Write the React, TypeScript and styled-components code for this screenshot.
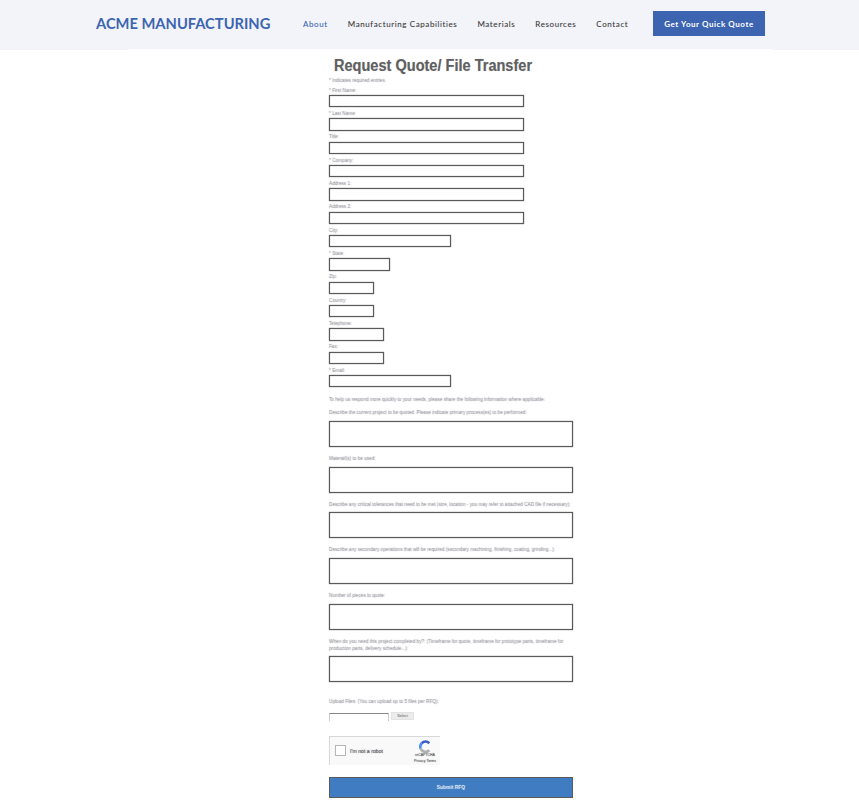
import React from "react";
import styled, { createGlobalStyle, css } from "styled-components";

const Global = createGlobalStyle`
  html, body { margin: 0; padding: 0; background: #fff; }
  body { font-family: "Liberation Sans", Arial, sans-serif; }
`;

const smallText = css`
  font-size: 4.7px;
  color: rgba(120, 120, 130, 0.4);
  text-shadow: 0 0 1px rgba(120, 120, 130, 0.7);
`;
const fieldBox = css`
  box-sizing: border-box;
  border: 1px solid #5a5a5a;
  box-shadow: 0 0 1px rgba(90, 90, 90, 0.9), inset 0 0 1px rgba(90, 90, 90, 0.9);
  background: #fff;
  flex: none;
`;

const Header = styled.header`
  height: 50px;
  background: #f3f4f9;
  display: flex;
  align-items: flex-start;
  padding: 11px 0 0 96px;
  box-sizing: border-box;
`;
const Logo = styled.div`
  font-family: Lato, sans-serif;
  font-size: 14.7px;
  font-weight: 700;
  color: #3c64b1;
  line-height: 25px;
  width: 207px;
  white-space: nowrap;
`;
const Nav = styled.nav`
  display: flex;
  align-items: center;
  height: 25px;
  gap: 20px;
  width: 350px;
`;
const NavLink = styled.a<{ $active?: boolean }>`
  font-family: Lato, sans-serif;
  font-size: 8px;
  font-weight: 400;
  letter-spacing: 0.6px;
  color: ${(p) => (p.$active ? "#3c64b1" : "#3a3a3a")};
  text-shadow: 0 0 1px ${(p) => (p.$active ? "rgba(60,100,177,.2)" : "rgba(50,50,50,.2)")};
  white-space: nowrap;
`;
const Quote = styled.a`
  width: 112px;
  height: 25px;
  background: #3c64b1;
  color: #fff;
  font-family: Lato, sans-serif;
  font-size: 8px;
  font-weight: 700;
  letter-spacing: 0.55px;
  display: flex;
  align-items: center;
  justify-content: center;
  white-space: nowrap;
`;

const Panel = styled.main`
  width: 644px;
  margin: -1px 0 0 128px;
  background: #fff;
  padding: 7px 0 0 201px;
  box-sizing: border-box;
  height: 762px;
`;
const Form = styled.form`
  width: 244px;
  display: flex;
  flex-direction: column;
`;
const Title = styled.h1`
  margin: 0 0 0 5px;
  font-size: 14.55px;
  line-height: 20px;
  font-weight: 700;
  color: #606060;
  text-shadow: 0 0 1px rgba(85, 85, 85, 0.35);
  white-space: nowrap;
  transform: scaleY(1.08);
`;
const Note = styled.div`
  ${smallText}
  line-height: 10px;
  margin-top: -0.5px;
  height: 8px;
  white-space: nowrap;
`;
const Field = styled.div`
  display: flex;
  flex-direction: column;
  height: 23.33px;
`;
const Label = styled.label`
  ${smallText}
  display: block;
  line-height: 4.4px;
  height: 4.4px;
  margin-top: 5.1px;
  margin-bottom: 2px;
  white-space: nowrap;
`;
const Input = styled.div<{ $w: number }>`
  ${fieldBox}
  width: ${(p) => p.$w}px;
  height: 12.3px;
`;
const Wide = styled.div<{ $top: number; $gap: number }>`
  ${smallText}
  margin-top: ${(p) => p.$top}px;
  margin-bottom: ${(p) => p.$gap}px;
  line-height: 7px;
  white-space: nowrap;
`;
const Wrap = styled(Wide)`
  white-space: normal;
`;
const Area = styled.div`
  ${fieldBox}
  width: 244px;
  height: 26px;
`;
const Upload = styled.div`
  display: flex;
  align-items: flex-start;
  gap: 2px;
  margin-top: 8px;
  height: 8px;
`;
const FileBox = styled.div`
  width: 60px;
  height: 8px;
  box-sizing: border-box;
  border: 1px solid #ccc;
  border-top-color: #888;
  border-bottom: none;
`;
const Select = styled.div`
  width: 23px;
  height: 8px;
  margin-top: -1px;
  background: #ececec;
  border: 1px solid #e2e2e2;
  box-sizing: border-box;
  font-size: 3.8px;
  line-height: 6px;
  text-align: center;
  color: rgba(80, 80, 80, 0.5);
  text-shadow: 0 0 1px rgba(80, 80, 80, 0.6);
`;
const Captcha = styled.div`
  margin-top: 15px;
  width: 111px;
  height: 28.7px;
  box-sizing: border-box;
  background: #f9f9f9;
  border: 1px solid #d8d8d8;
  border-right: none;
  border-bottom: none;
  display: flex;
  align-items: center;
  padding-left: 5px;
  position: relative;
`;
const Check = styled.div`
  width: 11px;
  height: 11px;
  box-sizing: border-box;
  border: 1px solid #b5b5b5;
  background: #fff;
  margin-right: 4px;
`;
const Robot = styled.span`
  font-size: 5.2px;
  color: rgba(30, 30, 30, 0.7);
  text-shadow: 0 0 1px rgba(30, 30, 30, 0.6);
  white-space: nowrap;
`;
const Badge = styled.div`
  position: absolute;
  right: 3px;
  top: 3px;
  width: 24px;
  display: flex;
  flex-direction: column;
  align-items: center;
  font-size: 3.5px;
  line-height: 5.5px;
  color: rgba(40, 40, 40, 0.7);
  text-shadow: 0 0 1px rgba(40, 40, 40, 0.6);
  text-align: center;
  white-space: nowrap;
`;
const Submit = styled.button`
  margin-top: 12.7px;
  width: 244px;
  height: 20.6px;
  background: #3f7cc2;
  border: 1px solid #5a5a5a;
  color: rgba(232, 240, 250, 0.75);
  text-shadow: 0 0 1px rgba(232, 240, 250, 0.6);
  font-family: inherit;
  font-size: 4.9px;
  font-weight: 700;
  padding: 0;
`;

const fields: [string, number][] = [
  ["* First Name:", 195],
  ["* Last Name:", 195],
  ["Title:", 195],
  ["* Company:", 195],
  ["Address 1:", 195],
  ["Address 2:", 195],
  ["City:", 122],
  ["* State:", 61],
  ["Zip:", 45],
  ["Country:", 45],
  ["Telephone:", 55],
  ["Fax:", 55],
  ["* Email:", 122],
];

const areas: string[] = [
  "Materail(s) to be used:",
  "Describe any critical tolerances that need to be met (size, location - you may refer to attached CAD file if necessary):",
  "Describe any secondary operations that will be required (secondary machining, finishing, coating, grinding...):",
  "Number of pieces to quote:",
];

export default function App() {
  return (
    <>
      <Global />
      <Header>
        <Logo>ACME MANUFACTURING</Logo>
        <Nav>
          <NavLink $active>About</NavLink>
          <NavLink>Manufacturing Capabilities</NavLink>
          <NavLink>Materials</NavLink>
          <NavLink>Resources</NavLink>
          <NavLink>Contact</NavLink>
        </Nav>
        <Quote>Get Your Quick Quote</Quote>
      </Header>
      <Panel>
        <Form>
          <Title>Request Quote/ File Transfer</Title>
          <Note>* Indicates required entries.</Note>
          {fields.map(([l, w]) => (
            <Field key={l}>
              <Label>{l}</Label>
              <Input $w={w} />
            </Field>
          ))}
          <Wide $top={9.5} $gap={3}>
            To help us respond more quickly to your needs, please share the following information where applicable:
          </Wide>
          <Wide $top={3} $gap={4.7}>
            Describe the current project to be quoted. Please indicate primary process(es) to be performed:
          </Wide>
          <Area />
          {areas.map((t) => (
            <React.Fragment key={t}>
              <Wide $top={8} $gap={4.7}>{t}</Wide>
              <Area />
            </React.Fragment>
          ))}
          <Wrap $top={8.7} $gap={4}>
            When do you need this project completed by?: (Timeframe for quote, timeframe for prototype parts, timeframe for production parts, delivery schedule...):
          </Wrap>
          <Area />
          <Wide $top={15.7} $gap={0}>Upload Files: (You can upload up to 5 files per RFQ):</Wide>
          <Upload>
            <FileBox />
            <Select>Select</Select>
          </Upload>
          <Captcha>
            <Check />
            <Robot>I'm not a robot</Robot>
            <Badge>
              <svg width="13" height="13" viewBox="0 0 24 24" fill="none">
                <path d="M19 6 A10 10 0 0 0 5 6" stroke="#3b5fc4" strokeWidth="5" />
                <path d="M5 6 A10 10 0 0 0 3 16" stroke="#4d90f4" strokeWidth="5" />
                <path d="M3 16 A10 10 0 0 0 19 19" stroke="#b0b0b0" strokeWidth="5" />
              </svg>
              <span>reCAPTCHA</span>
              <span>Privacy Terms</span>
            </Badge>
          </Captcha>
          <Submit type="button">Submit RFQ</Submit>
        </Form>
      </Panel>
    </>
  );
}
